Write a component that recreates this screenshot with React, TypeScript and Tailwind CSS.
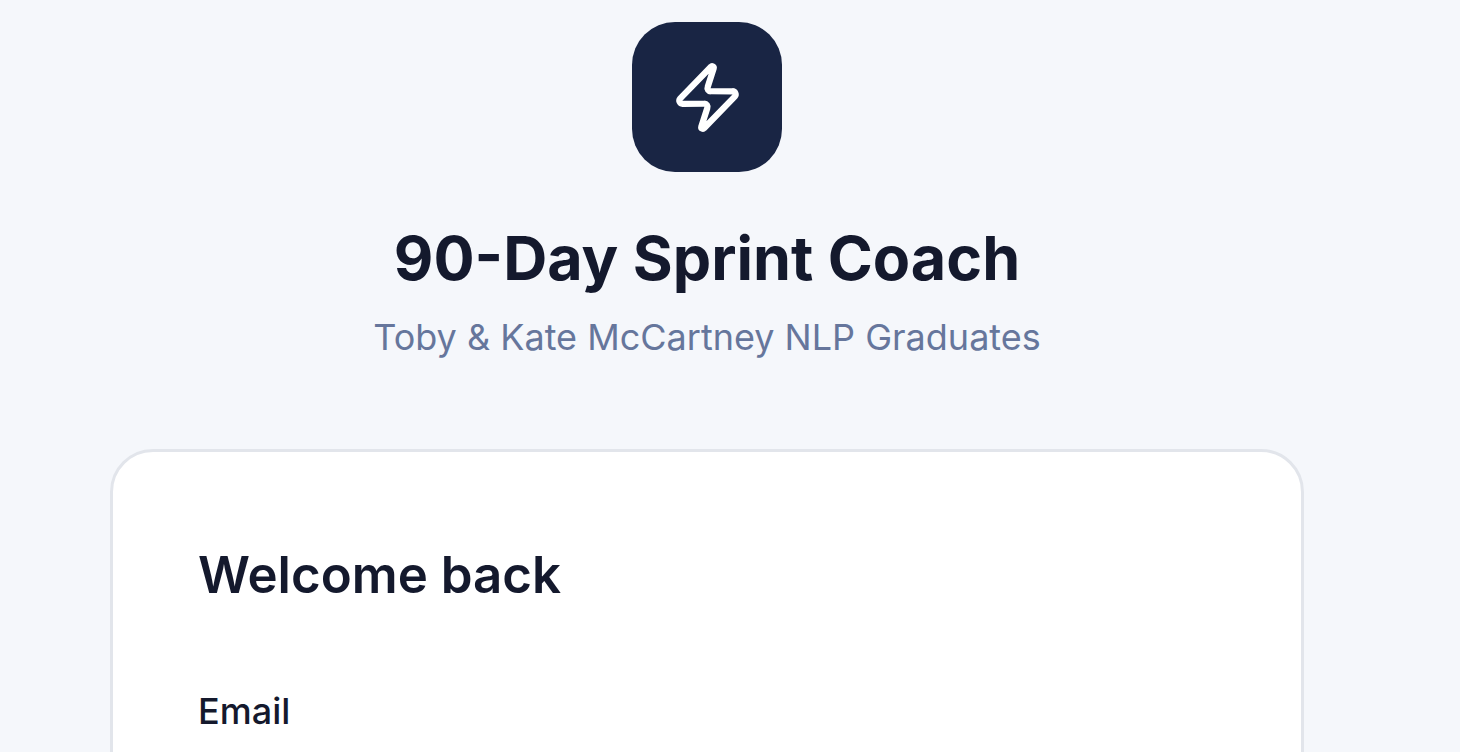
import React, { useState } from 'react';
import { Zap } from 'lucide-react';

export default function LoginPage() {
  const [email, setEmail] = useState('');

  return (
    <div className="h-screen overflow-hidden bg-[#f5f7fb] pt-[22px] pr-[46px] font-['Inter',sans-serif] text-[#14192d]">
      <main className="w-full max-w-[1194px] mx-auto">
        <header className="flex flex-col items-center text-center mb-[85px]">
          <div className="flex items-center justify-center size-[150px] rounded-[43px] bg-[#192544] mb-[44px]">
            <Zap className="size-[75px] text-white" strokeWidth={2} aria-hidden="true" />
          </div>
          <h1 className="text-[61px] leading-[85px] font-bold">90-Day Sprint Coach</h1>
          <p className="mt-[10px] text-[36px] leading-[53px] text-[#66769c]">
            Toby &amp; Kate McCartney NLP Graduates
          </p>
        </header>

        <section className="bg-white rounded-[43px] border-3 border-[#e2e5eb] p-[85px]">
          <h2 className="text-[51px] leading-[76px] font-semibold mb-[64px]">Welcome back</h2>
          <form onSubmit={(e) => e.preventDefault()}>
            <label htmlFor="email" className="block text-[36px] leading-[68px] font-medium">
              Email
            </label>
            <input
              id="email"
              type="email"
              value={email}
              onChange={(e) => setEmail(e.target.value)}
              autoComplete="email"
              className="mt-[16px] w-full h-[107px] px-[32px] text-[36px] rounded-[27px] border-3 border-[#e2e5eb] bg-white"
            />
          </form>
        </section>
      </main>
    </div>
  );
}
